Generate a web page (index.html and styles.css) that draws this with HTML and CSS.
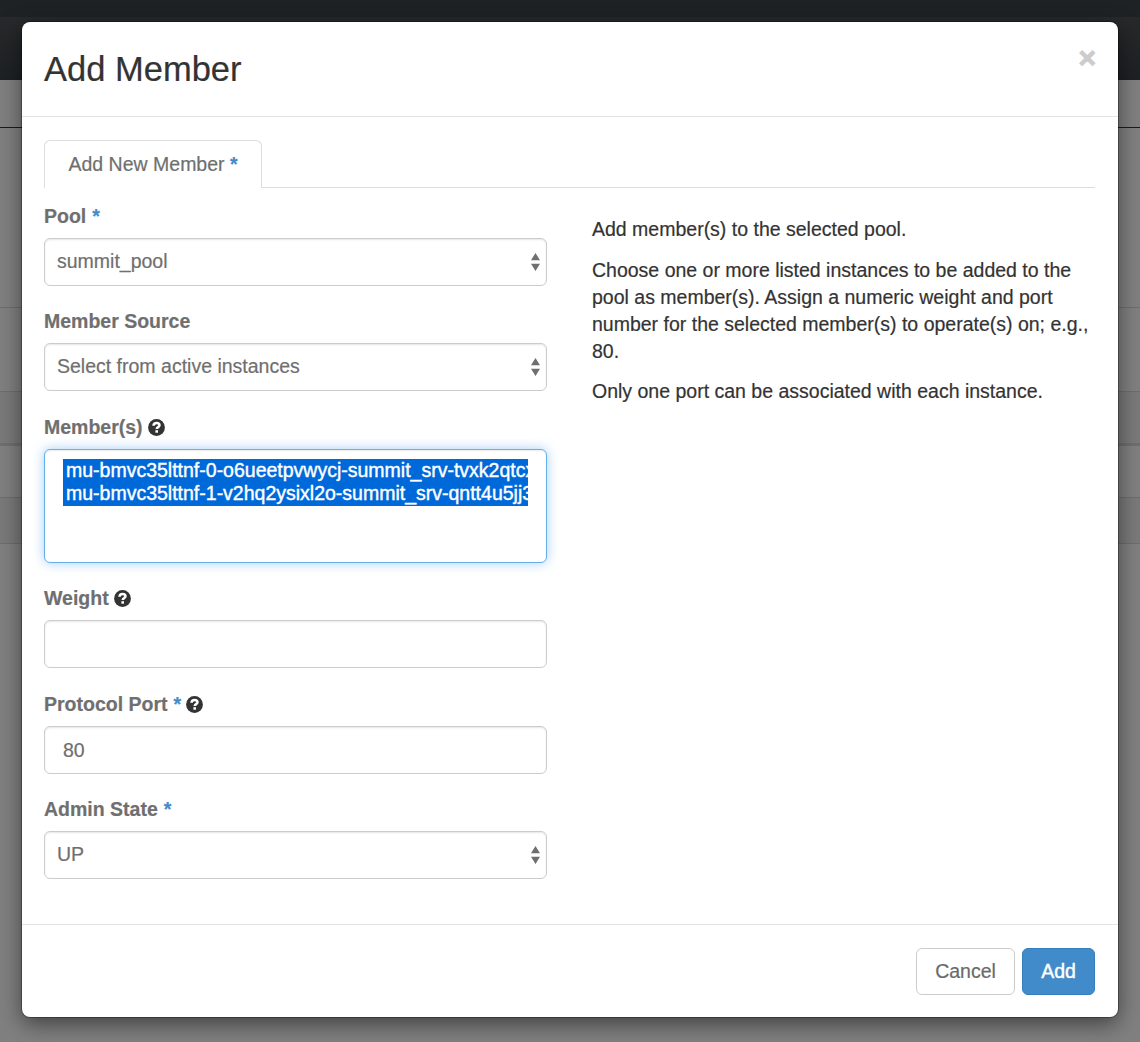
FILE: index.html
```html
<!DOCTYPE html>
<html lang="en">
<head>
<meta charset="utf-8">
<title>Add Member</title>
<link rel="stylesheet" href="styles.css">
</head>
<body>
<svg class="defs" aria-hidden="true">
  <symbol id="help" viewBox="0 0 17 17">
    <circle cx="8.5" cy="8.5" r="8.4" fill="#333"/>
    <path d="M5.500 6.700C5.600 4.600 6.900 3.900 8.600 3.900c1.700 0 2.900.8 2.900 2.300C11.500 8.200 8.700 8 8.700 10.100" fill="none" stroke="#fff" stroke-width="2.500"/>
    <rect x="7.400" y="11.200" width="2.600" height="2.500" fill="#fff"/>
  </symbol>
  <symbol id="updown" viewBox="0 0 9 18">
    <path d="M4.500 0L9 7.300H0zM0 10.700h9L4.500 18z" fill="#6f6f6f"/>
  </symbol>
</svg>
<div class="page" aria-hidden="true">
  <div class="topbar"></div>
  <div class="navbar"></div>
  <div class="heading"></div>
  <div class="spacer"></div>
  <div class="toolbar"></div>
  <div class="thead"></div>
  <div class="trow"></div>
  <div class="tfoot"></div>
</div>
<form class="modal">
  <header class="modal-header">
    <h1 class="title">Add Member</h1>
    <span class="close">×</span>
  </header>
  <div class="modal-body">
    <div class="tabs"><div class="tab">Add New Member <span class="req">*</span></div></div>
    <div class="columns">
      <div class="fields">
        <div class="group">
          <div class="label"><span>Pool</span> <span class="req">*</span></div>
          <div class="control select"><span>summit_pool</span><svg class="arrows"><use href="#updown"/></svg></div>
        </div>
        <div class="group">
          <div class="label"><span>Member Source</span></div>
          <div class="control select"><span>Select from active instances</span><svg class="arrows"><use href="#updown"/></svg></div>
        </div>
        <div class="group">
          <div class="label"><span>Member(s)</span><svg class="help"><use href="#help"/></svg></div>
          <div class="control list">
            <div class="option">mu-bmvc35lttnf-0-o6ueetpvwycj-summit_srv-tvxk2qtcx</div>
            <div class="option">mu-bmvc35lttnf-1-v2hq2ysixl2o-summit_srv-qntt4u5jj3</div>
          </div>
        </div>
        <div class="group">
          <div class="label"><span>Weight</span><svg class="help"><use href="#help"/></svg></div>
          <div class="control input"></div>
        </div>
        <div class="group">
          <div class="label"><span>Protocol Port</span> <span class="req">*</span><svg class="help"><use href="#help"/></svg></div>
          <div class="control input">80</div>
        </div>
        <div class="group">
          <div class="label"><span>Admin State</span> <span class="req">*</span></div>
          <div class="control select"><span>UP</span><svg class="arrows"><use href="#updown"/></svg></div>
        </div>
      </div>
      <div class="description">
        <p>Add member(s) to the selected pool.</p>
        <p>Choose one or more listed instances to be added to the pool as member(s). Assign a numeric weight and port number for the selected member(s) to operate(s) on; e.g., 80.</p>
        <p>Only one port can be associated with each instance.</p>
      </div>
    </div>
  </div>
  <footer class="modal-footer">
    <button type="button" class="btn">Cancel</button>
    <button type="button" class="btn primary">Add</button>
  </footer>
</form>
</body>
</html>
```
FILE: styles.css
```css
* { box-sizing: border-box; }
body {
  margin: 0;
  height: 1042px;
  display: grid;
  overflow: hidden;
  background: #808080;
  color: #333;
  font: 19.5px/27px "Liberation Sans", Arial, sans-serif;
  -webkit-text-stroke: .2px;
}
.defs { position: absolute; width: 0; height: 0; }

/* Dimmed page behind the dialog */
.page { grid-area: 1 / 1; }
.topbar { height: 17px; background: #1e2224; }
.navbar { height: 63px; background: linear-gradient(#28292a, #1d2124); }
.heading { height: 48px; border-bottom: 1px solid #1c1c1c; }
.spacer { height: 180px; border-bottom: 1px solid #6e6e6e; }
.toolbar { height: 84px; border-bottom: 1px solid #6e6e6e; }
.thead { height: 54px; background: #7a7a7a; border-bottom: 3px solid #6f6f6f; }
.trow { height: 52px; border-bottom: 1px solid #6e6e6e; }
.tfoot { height: 46px; background: #7a7a7a; border-bottom: 1px solid #6e6e6e; }

.modal {
  grid-area: 1 / 1;
  z-index: 1;
  margin: 22px;
  height: 995px;
  display: flex;
  flex-direction: column;
  background: #fff;
  border-radius: 8px;
  box-shadow: 0 0 0 1px rgba(0, 0, 0, .3), 0 7px 22px rgba(0, 0, 0, .5);
}
.modal-header {
  height: 95px;
  padding: 0 22px;
  display: flex;
  justify-content: space-between;
  align-items: flex-start;
  border-bottom: 1px solid #e3e3e3;
}
.title { margin: 27px 0 0; font-size: 34.5px; line-height: 40px; font-weight: 400; }
.close { margin-top: 16px; font-size: 30px; line-height: 40px; font-weight: 700; color: #ccc; -webkit-text-stroke: 1px #ccc; }
.modal-body { flex: 1; padding: 23px 23px 0 22px; }
.tabs { height: 48px; display: flex; border-bottom: 1px solid #ddd; }
.tab {
  width: 218px;
  height: 48px;
  padding: 10px 0 0 23.5px;
  color: #6f6f6f;
  background: #fff;
  border: 1px solid #ddd;
  border-bottom: 0;
  border-radius: 6px 6px 0 0;
  white-space: nowrap;
}
.req { color: #428bca; font-weight: 700; }
.columns { display: grid; grid-template-columns: 503px 1fr; column-gap: 45px; }
.fields { padding-top: 15px; }
.group { margin-bottom: 22.4px; }
.label { height: 27px; margin-bottom: 8px; display: flex; gap: 6px; align-items: center; color: #6f6f6f; font-weight: 700; }
.help { width: 17px; height: 17px; margin-left: -1px; }
.control {
  height: 48px;
  display: flex;
  align-items: center;
  color: #6f6f6f;
  background: #fff;
  border: 1px solid #ccc;
  border-radius: 6px;
  box-shadow: inset 0 1px 2px rgba(0, 0, 0, .1);
}
.select { justify-content: space-between; padding: 0 6px 1.2px 12px; }
.arrows { width: 9px; height: 18px; margin-top: 1.200px; }
.input { padding: 1px 0 0 18px; }
.list {
  height: 114px;
  display: block;
  padding: 9px 18px;
  border-color: #66afe9;
  box-shadow: inset 0 1px 2px rgba(0, 0, 0, .08), 0 0 12px rgba(102, 175, 233, .6);
}
.option {
  height: 23.5px;
  padding-left: 3px;
  overflow: hidden;
  white-space: nowrap;
  line-height: 23px;
  color: #fff;
  background: #0069d9;
  -webkit-text-stroke: .4px #fff;
}
.description { padding-top: 28px; }
.description p { margin: 0 0 13.5px; }
.modal-footer {
  height: 93px;
  padding: 23px 23px 0;
  display: flex;
  justify-content: flex-end;
  gap: 7px;
  border-top: 1px solid #e3e3e3;
}
.btn {
  width: 99px;
  height: 47px;
  padding: 0;
  font: inherit;
  color: #6a6a6a;
  background: #fff;
  border: 1px solid #ccc;
  border-radius: 6px;
}
.primary { width: 73px; color: #fff; background: #428bca; border-color: #357ebd; -webkit-text-stroke: .4px #fff; }
```
